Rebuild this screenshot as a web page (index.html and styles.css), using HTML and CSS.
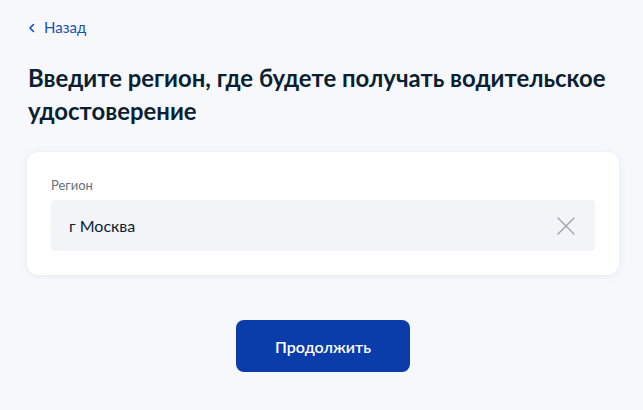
FILE: index.html
```html
<!DOCTYPE html>
<html lang="ru">
<head>
<meta charset="utf-8">
<link rel="stylesheet" href="styles.css">
</head>
<body>
<main class="page">
  <a class="back" href="#">
    <svg class="back-icon" width="8" height="10" viewBox="0 0 8 10"><path d="M5.5 1.5 L2 5 L5.5 8.5" fill="none" stroke="#0d4cd3" stroke-width="1.6" stroke-linecap="round" stroke-linejoin="round"/></svg>
    <span>Назад</span>
  </a>
  <h1 class="title">Введите регион, где будете получать водительское удостоверение</h1>
  <section class="card">
    <label class="label">Регион</label>
    <div class="field">
      <span class="value">г Москва</span>
      <svg class="clear" width="18" height="18" viewBox="0 0 18 18"><path d="M1 1 L17 17 M17 1 L1 17" stroke="#9ca3b2" stroke-width="1.4" stroke-linecap="round"/></svg>
    </div>
  </section>
  <div class="actions">
    <button class="btn">Продолжить</button>
  </div>
</main>
</body>
</html>
```
FILE: styles.css
```css
html, body {
  margin: 0;
  padding: 0;
  background: #f6f8fb;
  font-family: Lato, "Noto Sans", sans-serif;
  color: #0b1f33;
}
.page {
  padding: 17px 24px 0 27px;
  display: flex;
  flex-direction: column;
}
.back {
  display: flex;
  align-items: center;
  gap: 8px;
  color: #1d4fb8;
  text-decoration: none;
  font-size: 15px;
  line-height: 20px;
  padding-left: 1px;
}
.back-icon { margin-top: 1px; }
.title {
  margin: 24px 0 0 1px;
  font-size: 23.9px;
  line-height: 33px;
  font-weight: 700;
  color: #0b1f33;
}
.card {
  margin-top: 25px;
  background: #ffffff;
  border-radius: 12px;
  box-shadow: 0 1px 6px rgba(180, 190, 210, 0.25);
  padding: 25px 24px 24px 24px;
  display: flex;
  flex-direction: column;
}
.label {
  font-size: 13px;
  line-height: 16px;
  color: #66727f;
  margin-bottom: 7px;
}
.field {
  height: 51px;
  background: #f2f4f8;
  border-radius: 4px;
  display: flex;
  align-items: center;
  justify-content: space-between;
  padding: 0 20px 0 18px;
}
.value {
  font-size: 16px;
  color: #0b1f33;
}
.clear { margin-top: 1px; }
.actions {
  display: flex;
  justify-content: center;
  margin-top: 45px;
}
.btn {
  width: 174px;
  height: 52px;
  border: none;
  border-radius: 8px;
  background: #0b3daa;
  color: #ffffff;
  font-family: Lato, "Noto Sans", sans-serif;
  font-size: 16px;
  font-weight: 600;
}
```
